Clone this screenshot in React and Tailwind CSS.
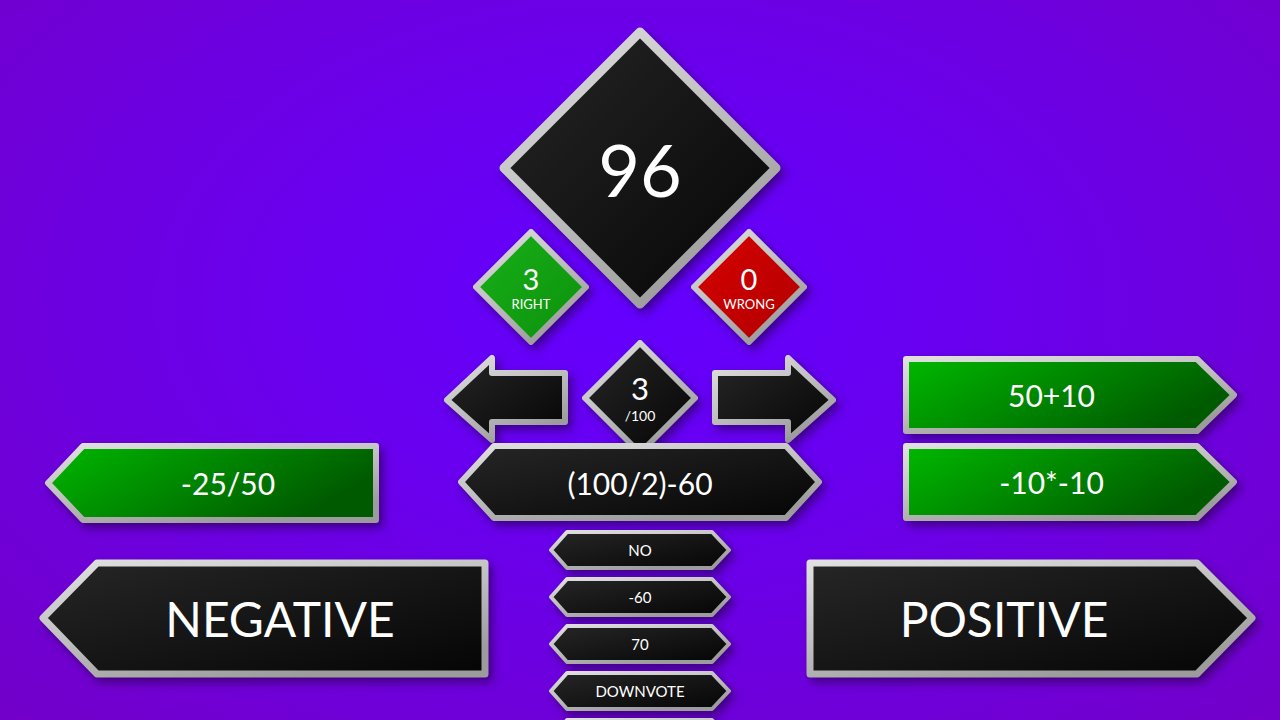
import React from 'react';

// one shared set of gradients for every shape on the board
function Defs() {
  return (
    <svg className="absolute w-0 h-0" aria-hidden="true">
      <defs>
        <linearGradient id="fBlack" x1="0" y1="0" x2="1" y2="1">
          <stop offset="0" stopColor="#262626" />
          <stop offset="1" stopColor="#050505" />
        </linearGradient>
        <linearGradient id="fGreen" x1="0" y1="0" x2="1" y2="0.4">
          <stop offset="0" stopColor="#00b800" />
          <stop offset="1" stopColor="#005a00" />
        </linearGradient>
        <linearGradient id="fGreenD" x1="0" y1="0" x2="1" y2="1">
          <stop offset="0" stopColor="#18b018" />
          <stop offset="1" stopColor="#0c900c" />
        </linearGradient>
        <linearGradient id="fRed" x1="0" y1="0" x2="1" y2="1">
          <stop offset="0" stopColor="#d80000" />
          <stop offset="1" stopColor="#b00000" />
        </linearGradient>
        <linearGradient id="edge" x1="0" y1="0" x2="0.6" y2="1">
          <stop offset="0" stopColor="#e0e0e0" />
          <stop offset="0.5" stopColor="#c2c2c2" />
          <stop offset="1" stopColor="#9c9c9c" />
        </linearGradient>
      </defs>
    </svg>
  );
}

function Shape({ box, view, points, fill = 'fBlack', sw = 6, text = '', children }) {
  return (
    <div className={`relative shrink-0 flex items-center justify-center text-white ${box}`}>
      <svg
        viewBox={view}
        className="absolute inset-0 w-full h-full overflow-visible drop-shadow-[4px_5px_5px_rgba(20,0,40,0.5)]"
      >
        <polygon
          points={points}
          fill={`url(#${fill})`}
          stroke="url(#edge)"
          strokeWidth={sw}
          strokeLinejoin="round"
        />
      </svg>
      <div className={`relative leading-none ${text}`}>{children}</div>
    </div>
  );
}

function SmallDiamond({ fill, value, label, big = 'text-[29px]', small = 'text-[13px]' }) {
  return (
    <Shape box="w-[118px] h-[118px]" view="0 0 118 118" points="59,4 114,59 59,114 4,59" fill={fill} sw={6}>
      <div className="flex flex-col items-center">
        <span className={big}>{value}</span>
        <span className={`mt-[5px] ${small}`}>{label}</span>
      </div>
    </Shape>
  );
}

function Hex({ children }) {
  return (
    <Shape
      box="w-[186px] h-[44px]"
      view="0 0 186 44"
      points="4,22 20,4 165,4 182,22 165,40 20,40"
      sw={4}
      text="text-[15px]"
    >
      {children}
    </Shape>
  );
}

export default function App() {
  return (
    <div className="relative h-[720px] w-full overflow-hidden font-['Lato','Liberation_Sans',sans-serif] bg-[radial-gradient(ellipse_75%_85%_at_50%_42%,#6400ff_0%,#6a00ec_40%,#7300c6_100%)]">
      <Defs />

      {/* score diamonds */}
      <div className="flex flex-col items-center pt-[26px]">
        <Shape box="w-[284px] h-[284px]" view="0 0 284 284" points="142,6 278,142 142,278 6,142" sw={9} text="text-[72px] pt-[2px]">
          96
        </Shape>
        <div className="flex gap-[100px] mt-[-82px]">
          <SmallDiamond fill="fGreenD" value="3" label="RIGHT" />
          <SmallDiamond fill="fRed" value="0" label="WRONG" />
        </div>
      </div>

      {/* arrows row */}
      <div className="grid grid-cols-[1fr_auto_1fr] mt-[-7px]">
        <div />
        <div className="flex items-center gap-[11px]">
          <Shape
            box="w-[127px] h-[90px]"
            view="0 0 127 90"
            points="4,47 49,5 49,20 122,20 122,69 49,69 49,87"
          />
          <SmallDiamond fill="fBlack" value="3" label="/100" big="text-[31px]" small="text-[14px]" />
          <Shape
            box="w-[127px] h-[90px]"
            view="0 0 127 90"
            points="123,47 78,5 78,20 5,20 5,69 78,69 78,87"
          />
        </div>
        <div className="flex justify-end pr-[42px] pt-[16px]">
          <Shape box="w-[336px] h-[80px]" view="0 0 336 80" points="4,4 295,4 332,40 295,76 4,76" fill="fGreen" text="text-[30px] pr-[37px]">
            50+10
          </Shape>
        </div>
      </div>

      {/* expression row */}
      <div className="grid grid-cols-[1fr_auto_1fr] mt-[-15px]">
        <div className="flex pl-[44px]">
          <Shape box="w-[336px] h-[82px]" view="0 0 336 82" points="4,41 39,4 332,4 332,78 39,78" fill="fGreen" text="text-[30px] pl-[32px]">
            -25/50
          </Shape>
        </div>
        <Shape box="w-[366px] h-[81px]" view="0 0 366 81" points="4,40 37,4 329,4 362,40 329,76 37,76" text="text-[30px]">
          (100/2)-60
        </Shape>
        <div className="flex justify-end pr-[42px]">
          <Shape box="w-[336px] h-[80px]" view="0 0 336 80" points="4,4 295,4 332,40 295,76 4,76" fill="fGreen" text="text-[30px] pr-[37px]">
            -10*-10
          </Shape>
        </div>
      </div>

      {/* answers row */}
      <div className="grid grid-cols-[1fr_auto_1fr] mt-[4px]">
        <div className="flex pl-[39px] pt-[31px]">
          <Shape box="w-[450px] h-[119px]" view="0 0 450 119" points="4,59 58,4 446,4 446,115 58,115" sw={7} text="text-[48px] pl-[32px]">
            NEGATIVE
          </Shape>
        </div>
        <div className="flex flex-col gap-[3px]">
          <Hex>NO</Hex>
          <Hex>-60</Hex>
          <Hex>70</Hex>
          <Hex>DOWNVOTE</Hex>
          <Hex />
        </div>
        <div className="flex justify-end pr-[24px] pt-[31px]">
          <Shape box="w-[450px] h-[119px]" view="0 0 450 119" points="4,4 391,4 446,59 391,115 4,115" sw={7} text="text-[48px] pr-[54px]">
            POSITIVE
          </Shape>
        </div>
      </div>
    </div>
  );
}
